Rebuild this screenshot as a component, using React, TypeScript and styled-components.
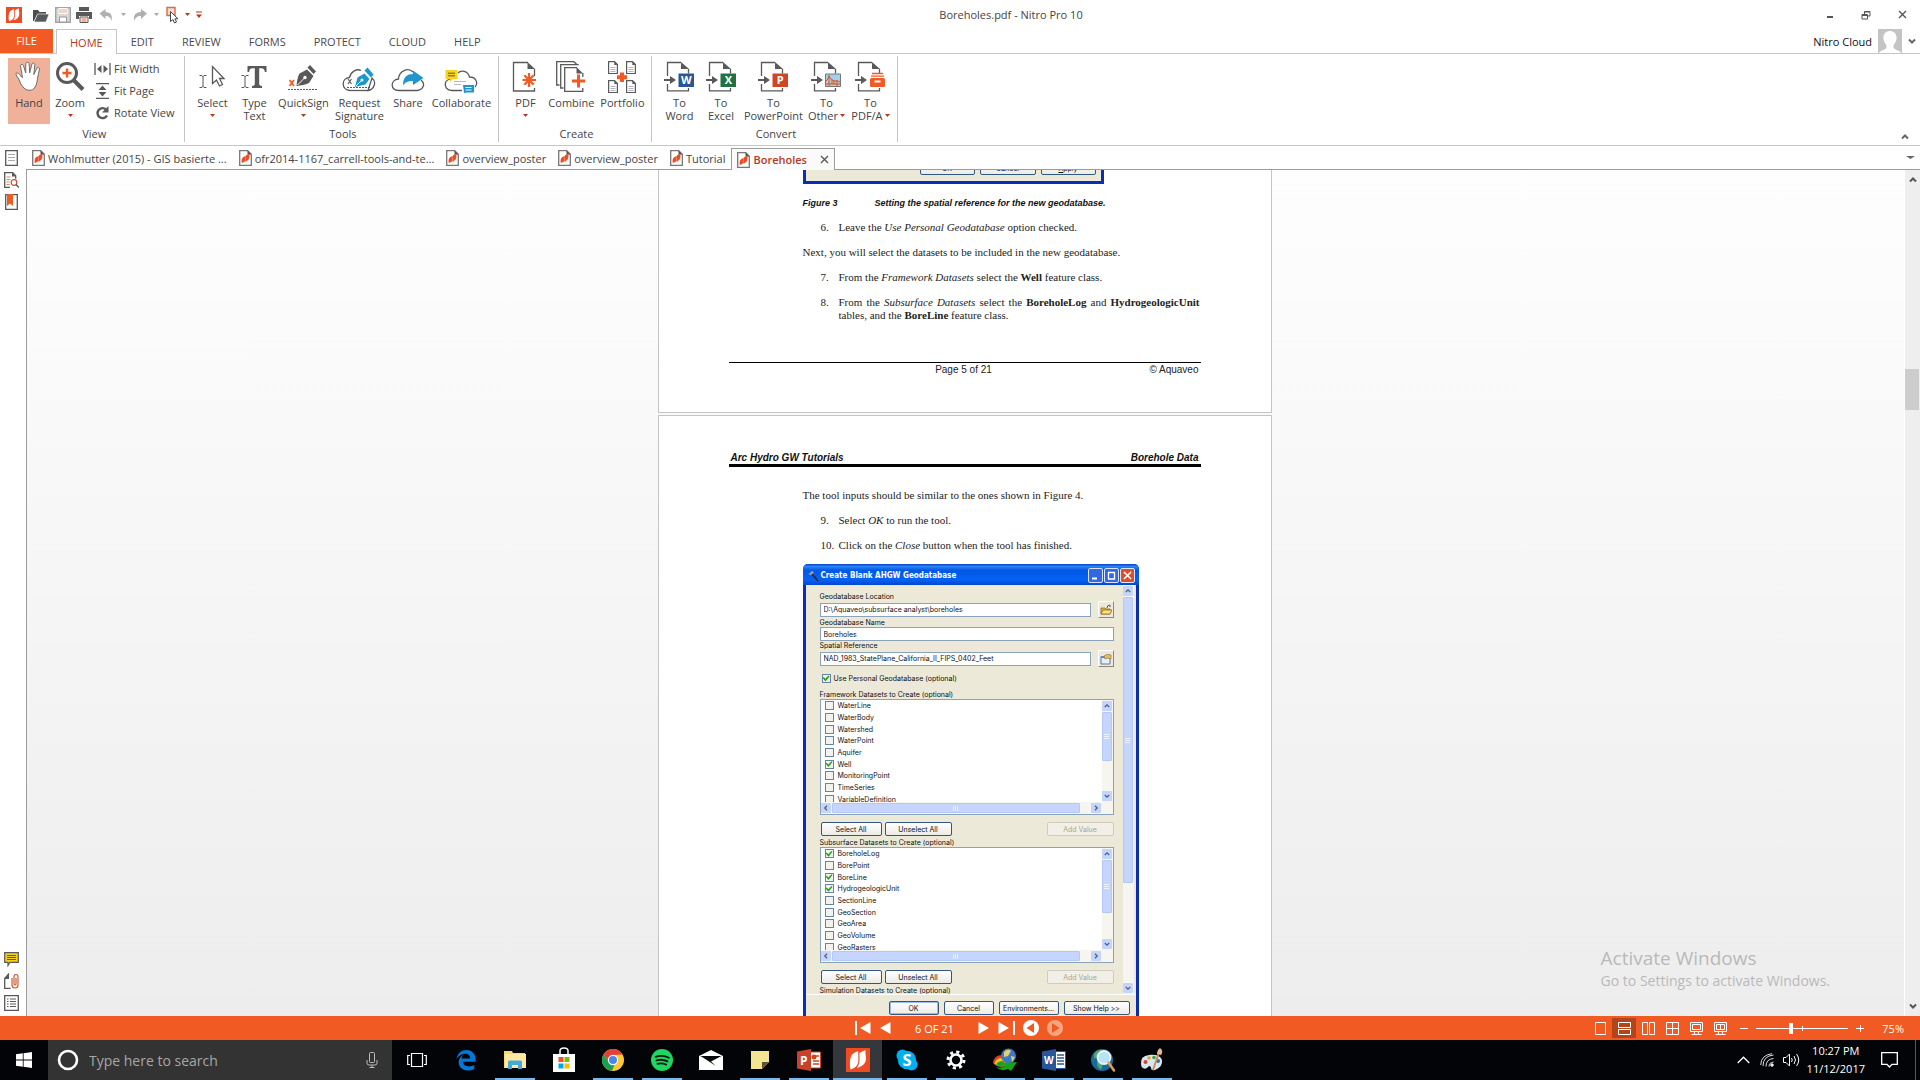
import React, { useState } from "react";
import styled, { createGlobalStyle, css } from "styled-components";

const UI = `"Open Sans", "Noto Sans", sans-serif`;
const ORANGE = "#f15a22";
const INK = "#58595b";
const RUST = "#b5391a";
const LINE = "#c6c6c6";

const Global = createGlobalStyle`
  *, *::before, *::after { box-sizing: border-box; }
  body { margin: 0; background: #fff; font: 11px/13px ${UI}; color: #444; }
  button { font: inherit; color: inherit; border: 0; padding: 0; background: none; }
  input { font: inherit; }
  svg { display: block; flex: none; }
  p, h1, h2, ul, ol { margin: 0; padding: 0; font: inherit; list-style: none; }
`;

/* ---------- application frame ---------- */

const Shell = styled.div`
  display: flex;
  flex-direction: column;
  height: 100vh;
  overflow: hidden;
`;

const TitleBar = styled.header`
  display: grid;
  grid-template-columns: 1fr auto 1fr;
  align-items: center;
  flex: none;
  height: 29px;
  padding-left: 6px;
`;

const QuickAccess = styled.div`
  display: flex;
  align-items: center;
  gap: 5px;
`;

const BareButton = styled.button`
  display: flex;
  align-items: center;
  justify-content: center;
`;

const AppTitle = styled.h1`
  padding-left: 96px;
  color: #444;
`;

const WindowButtons = styled.div`
  display: flex;
  justify-content: flex-end;
`;

const WindowButton = styled(BareButton)`
  width: 36px;
  height: 28px;
`;

const MenuBar = styled.nav`
  display: flex;
  flex: none;
  height: 25px;
  border-bottom: 1px solid ${LINE};
`;

const FileTab = styled.button`
  width: 53px;
  height: 24px;
  margin-right: 3px;
  padding-bottom: 2px;
  background: ${ORANGE};
  color: #fff;
`;

const MenuTab = styled.button<{ $active?: boolean }>`
  padding: 0 14px;
  color: #4a4a4a;
  ${(p) =>
    p.$active &&
    css`
      height: 25px;
      padding: 0 13px;
      border: 1px solid ${LINE};
      border-bottom: 0;
      background: #fff;
      color: ${RUST};
    `}
`;

const Account = styled.button`
  display: flex;
  align-items: center;
  gap: 6px;
  margin-left: auto;
  padding-right: 4px;
  color: #111;
`;

/* ---------- ribbon ---------- */

const Ribbon = styled.section`
  display: flex;
  flex: none;
  height: 92px;
  padding-top: 2px;
  border-bottom: 1px solid ${LINE};
`;

const Group = styled.div<{ $lead?: number }>`
  display: flex;
  flex-direction: column;
  height: 86px;
  padding: 2px 4px 0 ${(p) => p.$lead ?? 6}px;
  border-right: 1px solid ${LINE};
`;

const GroupTools = styled.div`
  display: flex;
  height: 66px;
`;

const GroupName = styled.h2`
  padding-top: 3px;
  line-height: 13px;
  text-align: center;
`;

const Tool = styled.button<{ $w: number; $on?: boolean }>`
  display: flex;
  flex-direction: column;
  align-items: center;
  gap: 3px;
  width: ${(p) => p.$w}px;
  height: 66px;
  padding-top: 3px;
  background: ${(p) => (p.$on ? "#f0b19b" : "transparent")};
`;

const ToolText = styled.span`
  display: flex;
  flex-direction: column;
  align-items: center;
  white-space: nowrap;
`;

const ToolLine = styled.span`
  display: flex;
  align-items: center;
  justify-content: center;
  gap: 2px;
  min-height: 13px;
`;

const SmallTools = styled.div`
  display: flex;
  flex-direction: column;
  padding: 0 6px 0 4px;
`;

const SmallTool = styled.button`
  display: flex;
  align-items: center;
  gap: 3px;
  height: 22px;
  padding-bottom: 1px;
  white-space: nowrap;
`;

const RibbonEnd = styled.div`
  display: flex;
  align-items: flex-end;
  margin-left: auto;
  padding: 0 11px 4px 0;
`;

/* ---------- work area ---------- */

const Work = styled.div`
  display: flex;
  flex: 1;
  min-height: 0;
`;

const Sidebar = styled.aside`
  display: flex;
  flex-direction: column;
  justify-content: space-between;
  flex: none;
  width: 26px;
  padding: 4px 0 5px;
`;

const SideStack = styled.div`
  display: flex;
  flex-direction: column;
  align-items: center;
  gap: 6px;
  padding-right: 3px;
`;

const Stage = styled.div`
  display: flex;
  flex-direction: column;
  flex: 1;
  min-width: 0;
`;

const DocTabs = styled.div`
  display: flex;
  flex: none;
  height: 24px;
  border-bottom: 1px solid #9c9c9c;
`;

const DocTab = styled.button<{ $active?: boolean }>`
  display: flex;
  align-items: center;
  gap: 3px;
  height: 24px;
  padding: 0 6px;
  color: #444;
  white-space: nowrap;
  ${(p) =>
    p.$active &&
    css`
      height: 22px;
      margin-top: 2px;
      padding: 0 5px;
      border: 1px solid #9c9c9c;
      border-bottom: 0;
      background: #fafafa;
      color: ${RUST};
      font-weight: 600;
    `}
`;

const CloseMark = styled.span`
  padding-left: 10px;
`;

const TabsEnd = styled.div`
  display: flex;
  align-items: center;
  margin-left: auto;
  padding-right: 5px;
`;

const Viewer = styled.main`
  position: relative;
  display: flex;
  flex: 1;
  min-height: 0;
  border-left: 1px solid #9c9c9c;
`;

const Pages = styled.div`
  display: flex;
  flex-direction: column;
  align-items: center;
  gap: 2px;
  flex: 1;
  padding-right: 2px;
  overflow: hidden;
  border-right: 1px solid #fff;
  background: linear-gradient(#fefefe, #ededed);
`;

const ScrollRail = styled.div`
  display: flex;
  flex-direction: column;
  align-items: center;
  justify-content: space-between;
  flex: none;
  width: 15px;
  padding: 6px 0;
  background: linear-gradient(#cdcdcd, #cdcdcd) 0 199px / 14px 41px no-repeat #eeeeee;
`;

const Watermark = styled.div`
  position: absolute;
  right: 90px;
  bottom: 26px;
  display: flex;
  flex-direction: column;
  color: #b9b9b9;
  font-size: 14px;
  line-height: 19px;
`;

const WatermarkTitle = styled.strong`
  font-weight: 400;
  font-size: 19px;
  line-height: 26px;
`;

/* ---------- document pages ---------- */

const Sheet = styled.article<{ $first?: boolean }>`
  flex: none;
  width: 614px;
  padding: 0 70px 35px 70px;
  border: 1px solid #c5c5c5;
  border-top-width: ${(p) => (p.$first ? 0 : 1)}px;
  background: #fff;
  color: #222;
  font: 11px/13px "Liberation Serif", serif;
`;

const RunningHead = styled.div`
  display: flex;
  justify-content: space-between;
  padding: 35px 2px 0;
  border-bottom: 3px solid #000;
  color: #111;
  font: italic 700 10px/13px "Liberation Sans", sans-serif;
`;

const RunningFoot = styled.div`
  display: grid;
  grid-template-columns: 1fr auto 1fr;
  margin-top: 40px;
  padding: 0 2px 1px 0;
  border-top: 1px solid #000;
  font: 10px/13px "Liberation Sans", sans-serif;
`;

const FootRight = styled.span`
  text-align: right;
`;

const Prose = styled.div<{ $top: number }>`
  display: flex;
  flex-direction: column;
  gap: 12px;
  padding: ${(p) => p.$top}px 1px 0 74px;
`;

const Caption = styled.p`
  display: flex;
  gap: 37px;
  color: #111;
  font: italic 700 9px/11px "Liberation Sans", sans-serif;
`;

const Step = styled.div`
  display: grid;
  grid-template-columns: 18px 1fr;
  padding-left: 18px;
  text-align: justify;
  white-space: normal;
`;

/* ---------- dialog shown in the figures ---------- */

const DIALOG_FONT = `"Inter", "DejaVu Sans", sans-serif`;

const FigureEnd = styled.div`
  display: flex;
  align-items: flex-end;
  justify-content: flex-end;
  gap: 5px;
  width: 301px;
  height: 14px;
  margin-left: 74px;
  padding: 0 5px 6px 0;
  border: 3px solid #0a2fb4;
  border-top: 0;
  background: #ece9d8;
  font: 7px/9px ${DIALOG_FONT};
`;

const Dialog = styled.section`
  width: 336px;
  border: 3px solid #0a2fb4;
  border-top: 0;
  border-radius: 5px 5px 0 0;
  background: #ece9d8;
  color: #111;
  font: 7px/9px ${DIALOG_FONT};
`;

const DialogTitle = styled.div`
  display: flex;
  align-items: center;
  gap: 2px;
  height: 21px;
  margin: 0 -3px;
  padding: 2px 4px 0 5px;
  border-radius: 5px 5px 0 0;
  background: linear-gradient(#0a3fc8, #2a83f5 12%, #0058e4 30%, #0561f5 75%, #0348cc);
  color: #fff;
  font: 700 8px/10px "DejaVu Sans Condensed", sans-serif;
`;

const DialogButtons = styled.div`
  display: flex;
  gap: 1px;
  margin-left: auto;
`;

const TitleButton = styled(BareButton)<{ $close?: boolean }>`
  width: 15px;
  height: 15px;
  border: 1px solid #d8e4ff;
  border-radius: 2px;
  background: ${(p) => (p.$close ? "#dc4f28" : "#3468e0")};
`;

const DialogBody = styled.div`
  display: flex;
  height: 409px;
  padding-right: 2px;
  overflow: hidden;
`;

const Form = styled.form`
  flex: 1;
  min-width: 0;
  padding: 7px 9px 0 14px;
`;

const FieldLabel = styled.label`
  display: block;
  height: 9px;
  white-space: nowrap;
`;

const FieldRow = styled.div<{ $h: number }>`
  display: flex;
  align-items: center;
  justify-content: space-between;
  gap: 7px;
  height: ${(p) => p.$h}px;
`;

const TextBox = styled.input`
  flex: 1;
  min-width: 0;
  height: 14px;
  padding: 0 3px;
  border: 1px solid #8aa3b8;
  background: #fff;
  color: #111;
`;

const PickButton = styled(BareButton)`
  width: 16px;
  height: 17px;
  border: 1px solid #fff;
  border-right-color: #8d8a7a;
  border-bottom-color: #8d8a7a;
`;

const Tick = styled.input`
  appearance: none;
  flex: none;
  width: 9px;
  height: 9px;
  margin: 0;
  border: 1px solid #6584a3;
  background: #f3f2ec;
  &:checked::after {
    content: "";
    display: block;
    width: 7px;
    height: 7px;
    background: #21a121;
    clip-path: polygon(0 40%, 18% 30%, 40% 55%, 85% 8%, 100% 20%, 42% 92%);
  }
`;

const TickRow = styled.label<{ $lead?: boolean }>`
  display: flex;
  align-items: center;
  gap: 4px;
  white-space: nowrap;
  ${(p) =>
    p.$lead &&
    css`
      gap: 3px;
      height: 23px;
      padding-left: 2px;
    `}
`;

const ListBox = styled.div`
  height: 116px;
  border: 1px solid #8aa3b8;
  background: #fff;
`;

const ListTop = styled.div`
  display: flex;
  height: 102px;
  overflow: hidden;
`;

const ListRows = styled.div`
  display: grid;
  grid-template-rows: repeat(9, 1fr);
  flex: 1;
  height: 105px;
  padding-left: 4px;
`;

const XpRail = styled.div<{ $across?: boolean }>`
  display: flex;
  flex-direction: ${(p) => (p.$across ? "row" : "column")};
  flex: none;
  gap: 1px;
  ${(p) => (p.$across ? "height: 12px; padding: 1px 12px 1px 0;" : "width: 11px; padding: 1px 0;")}
  background: #f6f5f0;
`;

const XpArrow = styled(BareButton)`
  flex: none;
  width: 10px;
  height: 10px;
  border-radius: 1px;
  background: #c5d4fb;
`;

const XpThumb = styled.div<{ $size: number; $across?: boolean }>`
  display: flex;
  align-items: center;
  justify-content: center;
  ${(p) => (p.$across ? `width: ${p.$size}px; height: 10px;` : `height: ${p.$size}px; width: 10px;`)}
  border: 1px solid #b4c8f6;
  border-radius: 1px;
  background: #c6d5fd;
`;

const Filler = styled.div`
  flex: 1;
`;

const XpButton = styled.button<{ $w: number; $main?: boolean }>`
  flex: none;
  width: ${(p) => p.$w}px;
  height: 14px;
  border: 1px solid #31587f;
  border-radius: 2px;
  background: linear-gradient(#fff, #ecebe5);
  color: #111;
  white-space: nowrap;
  ${(p) => p.$main && "box-shadow: inset 0 0 0 1px #9dbbf0;"}
  &:disabled {
    border-color: #cfccbc;
    background: #f2f0e6;
    color: #a8a595;
  }
`;

const ButtonRow = styled.div`
  display: flex;
  gap: 3px;
  height: 23px;
  padding: 7px 0 0 1px;
`;

const DialogFoot = styled.div`
  display: flex;
  justify-content: flex-end;
  gap: 5px;
  height: 34px;
  padding: 6px;
  border-top: 1px solid #fff;
`;

/* ---------- status bar ---------- */

const StatusBar = styled.footer`
  display: grid;
  grid-template-columns: 1fr auto 1fr;
  align-items: center;
  flex: none;
  height: 24px;
  background: ${ORANGE};
  color: #fff;
`;

const Pager = styled.div`
  grid-column: 2;
  display: flex;
  align-items: center;
  gap: 8px;
  padding-right: 2px;
`;

const PageCount = styled.span`
  padding: 0 16px;
`;

const ViewControls = styled.div`
  display: flex;
  align-items: center;
  justify-content: flex-end;
  padding-right: 16px;
`;

const ViewButton = styled(BareButton)<{ $on?: boolean }>`
  width: 24px;
  height: 20px;
  background: ${(p) => (p.$on ? "#b3451c" : "transparent")};
`;

const ZoomStep = styled(BareButton)`
  width: 24px;
  height: 20px;
`;

const ZoomSlider = styled.input`
  appearance: none;
  width: 92px;
  height: 12px;
  margin: 0;
  background:
    linear-gradient(#fff, #fff) center / 100% 1px no-repeat,
    linear-gradient(#fff, #fff) 50% 50% / 1px 5px no-repeat;
  &::-webkit-slider-thumb {
    appearance: none;
    width: 4px;
    height: 11px;
    background: #fff;
  }
`;

const ZoomValue = styled.output`
  padding-left: 10px;
`;

/* ---------- desktop taskbar ---------- */

const TaskBar = styled.nav`
  display: flex;
  flex: none;
  height: 40px;
  background: #020408;
  color: #fff;
`;

const StartButton = styled(BareButton)`
  width: 48px;
`;

const SearchBox = styled.label`
  display: flex;
  align-items: center;
  gap: 10px;
  width: 344px;
  padding: 0 14px 0 9px;
  background: #333;
`;

const SearchInput = styled.input`
  flex: 1;
  min-width: 0;
  padding: 0;
  border: 0;
  outline: 0;
  background: none;
  color: #fff;
  font-size: 14px;
  &::placeholder {
    color: #a6a6a6;
    opacity: 1;
  }
`;

const TaskButton = styled(BareButton)<{ $open?: boolean; $front?: boolean }>`
  width: 49px;
  background:
    linear-gradient(#76b9ed, #76b9ed) center bottom / ${(p) => (p.$front ? 49 : p.$open ? 40 : 0)}px 2px no-repeat,
    ${(p) => (p.$front ? "#34373b" : "transparent")};
`;

const Tray = styled.div`
  display: flex;
  align-items: center;
  gap: 7px;
  margin-left: auto;
  padding-right: 4px;
`;

const Clock = styled.time`
  display: flex;
  flex-direction: column;
  align-items: center;
  line-height: 18px;
`;

const NoticeButton = styled(BareButton)`
  width: 36px;
  height: 40px;
  padding-right: 2px;
`;

const DesktopEdge = styled.div`
  width: 1px;
  height: 40px;
  background: #55585c;
`;

/* ---------- drawings ---------- */

const Down = ({ c = RUST, w = 5 }: { c?: string; w?: number }) => (
  <svg width={w} height="3" viewBox="0 0 6 3" preserveAspectRatio="none">
    <path d="M0 0h6L3 3z" fill={c} />
  </svg>
);

const Chevron = ({ up, c = "#666", w = 8 }: { up?: boolean; c?: string; w?: number }) => (
  <svg width={w} height={w} viewBox="0 0 8 8">
    <path d={up ? "M1 5.5 4 2.5 7 5.5" : "M1 2.5 4 5.5 7 2.5"} fill="none" stroke={c} strokeWidth="2" />
  </svg>
);

const NitroTile = ({ size = 16 }: { size?: number }) => (
  <svg width={size} height={size} viewBox="0 0 24 24">
    <rect width="24" height="24" fill="#f04c23" />
    <path d="M4.500 21.500C3.600 17 3.800 12 4.800 9 6 5.500 8.500 4.200 12.300 3.200c-.3 3 .2 5.500.1 8.800 0 4.500-2.400 8-7.900 9.500z" fill="#fff" />
    <path d="M13.300 5.500c2-1.800 4-2.500 6.200-3.200-.5 2.500.5 5 .4 8.500-.1 4.500-3 7.700-9 9.200 3-3.500 3-8.500 2.400-14.500z" fill="#fff" />
  </svg>
);

const PdfDoc = () => (
  <svg width="13" height="16" viewBox="0 0 13 16">
    <path d="M.7.7h8l3.600 3.600v11H.7z" fill="#fff" stroke="#777" strokeWidth="1.300" />
    <path d="M8.500.5v4h4z" fill="#555" />
    <path d="M2.800 13c-.5-3.500 0-6 3.900-7 0 3.500.2 6-3.900 7z" fill="#f04c23" />
    <path d="M6.800 5.600c1.200-1 2-1.400 3.600-1.900.3 3.500.2 6.800-4.600 8.100 1.200-2 1.200-4 1-6.200z" fill="#f04c23" />
  </svg>
);

const page = "M22.500 8v7M22.500 27v3H1.500V1.500H16";

const Glyph: Record<string, React.ReactNode> = {
  hand: (
    <svg width="28" height="32" viewBox="0 0 28 32">
      <path
        d="M9 27c-3-2.500-3.500-5-5-8.500C3 16.500.5 14 1 12.500c1-1.200 3.500 0 5.500 3.500l.9.600C7 12 5.500 7 5.600 4.600c.2-1.600 2.300-1.700 2.900 0L10.700 12C10.900 8 10.500 4 11 2.300c.5-1.500 2.600-1.500 3 0 .5 2.700.4 6 .7 9.500 1-3.500 1.500-6.500 2.300-8.800.6-1.500 2.700-1 2.800.5.1 3-.8 6.500-1 10 1.200-2 2-4.500 3.200-6.300.8-1.300 2.600-.7 2.500.8-.3 3-1.700 6-2 9.500-.5 5-1.500 8-4 10.500-2 1.800-7 1.800-9.500-1z"
        fill="#fff" stroke="#6a6a6a" strokeWidth="1"
      />
    </svg>
  ),
  zoom: (
    <svg width="30" height="32" viewBox="0 0 30 32">
      <circle cx="12" cy="12" r="9.500" fill="#fff" stroke={INK} strokeWidth="3" />
      <path d="M18.500 19 28 28.500" stroke={INK} strokeWidth="4" />
      <path d="M12 7.500v9M7.500 12h9" stroke={ORANGE} strokeWidth="2.400" />
    </svg>
  ),
  select: (
    <svg width="28" height="32" viewBox="0 0 28 32">
      <path d="M1.500 14.500h2.500l1 1 1-1h2.500M5 15v11M1.500 26.500h2.500l1-1 1 1h2.500" fill="none" stroke={INK} />
      <path d="M14.500 5.500v17l4-3.500 3 6 3-1.500-3-6h4.500z" fill="#fff" stroke={INK} strokeWidth="1.300" />
    </svg>
  ),
  type: (
    <svg width="28" height="32" viewBox="0 0 28 32">
      <path d="M1.500 14.500h2.500l1 1 1-1h2.500M5 15v11M1.500 26.500h2.500l1-1 1 1h2.500" fill="none" stroke={INK} />
      <path d="M7.500 5h19v6h-1.600c-.4-2.700-1.200-3.800-3.700-3.800h-2v15.500c0 1.500.6 2 2.800 2.300V27H12v-2c2.200-.3 2.800-.8 2.800-2.300V7.200h-2c-2.500 0-3.300 1-3.700 3.800H7.500z" fill={INK} />
    </svg>
  ),
  sign: (
    <svg width="30" height="32" viewBox="0 0 30 32">
      <path d="M8.500 25C9 20 9.500 16 11.500 12.500l7.500-4 6.500 6.500-4.500 7C17 24 13 24.500 8.500 25z" fill={INK} />
      <path d="M19.500 6.500 22 4l6 6.500-2.500 2.500z" fill={INK} />
      <path d="m9.500 24 7-7" stroke="#fff" />
      <circle cx="17" cy="16.500" r="1.700" fill="#fff" />
      <path d="m1.500 19 4.500 6m0-6-4.500 6" stroke={ORANGE} strokeWidth="1.700" />
      <path d="M0 28.500h30" stroke={INK} strokeWidth="1.200" strokeDasharray="2 1" />
    </svg>
  ),
  request: (
    <svg width="34" height="32" viewBox="0 0 34 32">
      <path d="M8 29.500C-1 29-1 17 7.500 16.500 9 10 15 7.500 19 9.500m11 7.500c5 4 2 12-4 12.500z" fill="none" stroke={INK} strokeWidth="1.300" />
      <path d="M8 29.500h18" stroke={INK} strokeWidth="1.300" />
      <path d="M13 26l2.500-9.500 7-4 5 5.500-4 5.500z" fill="#1e96cc" />
      <path d="m22.500 9.500 3-3 6 7-2.500 3z" fill="#1e96cc" />
      <path d="m14 25 5-5" stroke="#fff" />
      <circle cx="20" cy="19" r="1.500" fill="#fff" />
      <path d="m6 18 3.500 5m0-5L6 23" stroke={INK} strokeWidth="1.200" />
      <path d="M5 26.500h24" stroke={INK} strokeDasharray="2 1" />
    </svg>
  ),
  share: (
    <svg width="34" height="32" viewBox="0 0 34 32">
      <path d="M8 29.500C-1 29-1 19 7.500 18 8 10 17 6 22 11m8 8c5 4 2 10-4 10.500H8" fill="none" stroke={INK} strokeWidth="1.300" />
      <path d="M12 24.500C12 16 16 13 22 13V9.500L32.500 17 22 24v-4c-5 0-7.500 1-10 4.500z" fill="#1e96cc" />
    </svg>
  ),
  collaborate: (
    <svg width="34" height="32" viewBox="0 0 34 32">
      <path d="M18 29.500H8C0 29-1 20 6 18m8-6c3-3.500 10-2 11.500 4C33 16 34 23 31 26" fill="none" stroke={INK} strokeWidth="1.300" />
      <path d="M1.500 9h12v9H9l-3 3v-3H1.500z" fill="#fbd21c" />
      <path d="M4 12.200h7M4 14.800h7" stroke={INK} />
      <path d="M10 20.500h12M10 23.500h7" stroke="#bbb" />
      <path d="M19 24h11v7.500h-7L20 32z" fill="#1e96cc" />
      <path d="M21.500 26.500h6M21.500 29h6" stroke="#fff" />
    </svg>
  ),
  pdf: (
    <svg width="26" height="32" viewBox="0 0 26 32">
      <path d={page} fill="none" stroke={INK} strokeWidth="1.300" />
      <path d="M15.500 1v7H23z" fill={INK} />
      <path d="M17 12v14M10.500 19h13.500M12.300 14.300l9.400 9.400m0-9.400-9.400 9.400" stroke={ORANGE} strokeWidth="2.200" />
    </svg>
  ),
  combine: (
    <svg width="30" height="32" viewBox="0 0 30 32">
      <path d="M3.500 24H.700V.700h17.500" fill="none" stroke={INK} strokeWidth="1.300" />
      <path d="M7.500 27H4.700V3.700h18M18 .700l3 3" fill="none" stroke={INK} strokeWidth="1.300" />
      <path d="M26.800 12v4m0 11v3.300H8.700V6.700H21" fill="none" stroke={INK} strokeWidth="1.300" />
      <path d="M20.500 6v6.500H27z" fill={INK} />
      <path d="M22.500 13.500v13M16 20h13" stroke={ORANGE} strokeWidth="3" />
    </svg>
  ),
  portfolio: (
    <svg width="28" height="32" viewBox="0 0 28 32">
      {[[0, 0], [18, 0], [0, 19], [18, 19]].map(([x, y]) => (
        <g key={`${x}-${y}`} transform={`translate(${x} ${y})`}>
          <path d="M.600.600h6L9.400 3.500v9H.600z" fill="#fff" stroke={INK} strokeWidth="1.200" />
          <path d="M6.300.500v3.500h3.300z" fill={INK} />
          <path d="M2.500 6.500h5M2.500 8.500h5M2.500 10.500h5" stroke="#aab" strokeWidth=".900" />
        </g>
      ))}
      <path d="M14 11.500v9.500M9 16.200h10" stroke={ORANGE} strokeWidth="4" />
    </svg>
  ),
};

const ToIcon = ({ kind }: { kind: string }) => {
  const fill: Record<string, string> = { W: "#2a5699", X: "#207245", P: "#d04525" };
  return (
    <svg width="30" height="32" viewBox="0 0 30 32">
      <path d="M3.500 15V1.500H17M24.500 8v4.500M24.500 27v2.800h-21V23" fill="none" stroke={INK} strokeWidth="1.300" />
      <path d="M17 1v7h8z" fill={INK} />
      <path d="M0 19h8" stroke={INK} strokeWidth="2" />
      <path d="m6 15 6 4-6 4z" fill={INK} />
      {fill[kind] && (
        <>
          <path d="M14.500 12.500H30v13.500H14.500z" fill={fill[kind]} />
          <text x="22.300" y="23.300" fill="#fff" fontFamily="Open Sans" fontSize="11" fontWeight="700" textAnchor="middle">
            {kind}
          </text>
        </>
      )}
      {kind === "other" && (
        <>
          <path d="M14.500 13h15v12.500h-15z" fill="#9fd3ec" stroke="#777" />
          <path d="M15 21h14v4H15z" fill="#b9c8c0" />
          <path d="M18 25V14m8 11v-6M15 23h14M15 20q2-1 3-5 3 6 8 5 2 0 3 1M21 18v5m2-4v4" stroke="#d5542c" fill="none" />
        </>
      )}
      {kind === "archive" && (
        <>
          <path d="M17 12.500h11M16 15.200h13" stroke={ORANGE} strokeWidth="1.300" />
          <rect x="15" y="17" width="15" height="9" rx="1.500" fill={ORANGE} />
          <path d="M19.500 20.500h6" stroke="#fff" strokeWidth="2" />
        </>
      )}
    </svg>
  );
};

const TaskArt: Record<string, React.ReactNode> = {
  "Task View": (
    <svg width="20" height="16" viewBox="0 0 20 16" fill="none" stroke="#fff" strokeWidth="1.200">
      <path d="M4.500 1.500h11v13h-11zM3 3.500H.700v9H3M17 3.500h2.300v9H17" />
    </svg>
  ),
  Edge: (
    <svg width="22" height="24" viewBox="0 0 24 24">
      <path d="M1.500 10.800C3 4.500 7 1 12.500 1 19 1 22.500 6 22.500 11.500V14H8.500c.2 3.500 3 5 6.500 5 2.500 0 4.500-.7 6-1.600v4.300c-2 1-4.500 1.800-7.500 1.800C8 23.500 4 19.500 4 14.500c0-3.500 1.800-6.500 4.800-8-1.200 1.300-1.500 2.500-1.700 3.900h9.400c0-3.500-1.800-5.200-5-5.200-4 0-7.200 2-10 5.600z" fill="#0078d7" />
    </svg>
  ),
  "File Explorer": (
    <svg width="22" height="20" viewBox="0 0 22 20">
      <path d="M0 1h8l1 2h12v15H0z" fill="#f8d775" />
      <path d="M1 4h21v14H1z" fill="#ffe9a2" />
      <path d="M4 19v-7q0-1.500 1.500-1.500h11Q18 10.500 18 12v7h-4v-4H8v4z" fill="#46a9d6" />
    </svg>
  ),
  Store: (
    <svg width="24" height="26" viewBox="0 0 24 26">
      <path d="M8 8V4q0-3 4-3t4 3v4" fill="none" stroke="#fff" strokeWidth="1.500" />
      <path d="M1 7h22v18H1z" fill="#fff" />
      <path d="M6.500 10h5v5h-5z" fill="#f25022" /><path d="M12.500 10h5v5h-5z" fill="#7fba00" />
      <path d="M6.500 16.500h5v5h-5z" fill="#00a4ef" /><path d="M12.500 16.500h5v5h-5z" fill="#ffb900" />
    </svg>
  ),
  Chrome: (
    <svg width="22" height="22" viewBox="0 0 24 24">
      <circle cx="12" cy="12" r="12" fill="#fcc934" />
      <path d="M1.600 6A12 12 0 0 1 22.400 6L12 6.600 8 14.500z" fill="#e34133" />
      <path d="M1.600 6 8 15l6 2-3.300 7A12 12 0 0 1 1.600 6z" fill="#1d9e55" />
      <circle cx="12" cy="12" r="5.600" fill="#fff" /><circle cx="12" cy="12" r="4.400" fill="#4a86ee" />
    </svg>
  ),
  Spotify: (
    <svg width="22" height="22" viewBox="0 0 24 24">
      <circle cx="12" cy="12" r="12" fill="#1fd662" />
      <path d="M5 8.500q8-2.500 14.500 1M6 12.500q6.500-2 12 1M7 16.200q5-1.500 9.500.8" stroke="#0a1a10" strokeWidth="2" fill="none" strokeLinecap="round" />
    </svg>
  ),
  Mail: (
    <svg width="24" height="20" viewBox="0 0 24 20">
      <path d="M0 6 12 0l12 6v14H0z" fill="#fff" />
      <path d="M1.500 6h21L12 11.500l5 4.500z" fill="#05070b" />
    </svg>
  ),
  "Sticky Notes": (
    <svg width="18" height="18" viewBox="0 0 18 18">
      <path d="M0 0h18v11l-7 7H0z" fill="#f3e491" /><path d="M11 18v-7h7z" fill="#5b5431" />
    </svg>
  ),
  PowerPoint: (
    <svg width="24" height="22" viewBox="0 0 24 22">
      <path d="M12 3h11.500v16H12z" fill="#fff" stroke="#c9432a" />
      <path d="M16 7h6M16 12h6M16 15h6" stroke="#d04525" strokeWidth="1.400" />
      <circle cx="17" cy="8" r="2.500" fill="#d04525" />
      <path d="M0 2.500 14 0v22L0 19.500z" fill="#c8412b" />
      <text x="6.800" y="15.500" fill="#fff" fontSize="12" fontWeight="700" fontFamily="Open Sans" textAnchor="middle">P</text>
    </svg>
  ),
  "Nitro Pro": <NitroTile size={24} />,
  Skype: (
    <svg width="22" height="22" viewBox="0 0 24 24">
      <circle cx="12" cy="12" r="10" fill="#00aff0" /><circle cx="7" cy="7" r="6.500" fill="#00aff0" /><circle cx="17" cy="17" r="6.500" fill="#00aff0" />
      <text x="12" y="18.500" fill="#fff" fontSize="18" fontWeight="700" fontFamily="Open Sans" textAnchor="middle">S</text>
    </svg>
  ),
  Settings: (
    <svg width="20" height="20" viewBox="0 0 20 20" fill="none" stroke="#fff">
      <circle cx="10" cy="10" r="5.500" strokeWidth="2.600" />
      <circle cx="10" cy="10" r="8" strokeWidth="3" strokeDasharray="3.100 3.180" />
    </svg>
  ),
  "Download Manager": (
    <svg width="24" height="24" viewBox="0 0 24 24">
      <path d="M0 15Q1 7 9 7q6 0 7 5l-2 5Q5 21 0 15z" fill="#e83b22" />
      <path d="M1.500 15.500Q3 10 9 10q5 1 5 5l-3 3Q5 20 1.500 15.500z" fill="#f7c827" />
      <path d="M3 16.500q2-3.500 6-3.500 3 1 3 4-5 3-9-.5z" fill="#16a31d" />
      <circle cx="15.500" cy="8" r="7.500" fill="#3c78c8" />
      <path d="M11 4q4-4 7-1l-3 5-4 1zM18 8l4 1-3 5z" fill="#e4cf6a" />
      <path d="M3 19q4 2 9-1l-1-3 13-1-6 9-3-2q-7 3-12-2z" fill="#16a31d" />
    </svg>
  ),
  Word: (
    <svg width="24" height="22" viewBox="0 0 24 22">
      <path d="M12 2.500h11.500v17H12z" fill="#fff" stroke="#2a5699" />
      <path d="M15 6h7M15 9h7M15 12h7M15 15h7" stroke="#2a5699" strokeWidth="1.300" />
      <path d="M0 2.500 14 0v22L0 19.500z" fill="#2a5699" />
      <text x="6.800" y="15" fill="#fff" fontSize="10" fontWeight="700" fontFamily="Open Sans" textAnchor="middle">W</text>
    </svg>
  ),
  ArcMap: (
    <svg width="24" height="24" viewBox="0 0 24 24">
      <circle cx="11" cy="12" r="11" fill="#1c6a9c" />
      <path d="M3 6q4-5 8-4l-3 6-5 3zM6 13l6 2-2 7q-5-4-4-9z" fill="#4fa86a" />
      <circle cx="13" cy="9.500" r="6.500" fill="#b8e2f5" stroke="#e8f4fa" strokeWidth="1.800" />
      <path d="m17.500 14.500 5.500 8" stroke="#d9a05a" strokeWidth="2.600" strokeLinecap="round" />
    </svg>
  ),
  Paint: (
    <svg width="24" height="24" viewBox="0 0 24 24">
      <path d="M1 16Q0 8 9 7q11-1 13 5 1 7-7 10-4 1-4-2 0-2-2-2-3 4-6 2-2-1-2-4z" fill="#d8e6ef" />
      <circle cx="5.500" cy="14" r="2" fill="#d8432c" /><circle cx="9" cy="10" r="1.800" fill="#e7a52a" />
      <circle cx="14" cy="9.500" r="1.800" fill="#3f9b46" /><circle cx="18" cy="13" r="2" fill="#2e6cc0" />
      <path d="M18.500 6 13 22" stroke="#c98a45" strokeWidth="1.800" /><path d="M17 6q0-4 3-6 4 3 1 7z" fill="#e5b98c" />
    </svg>
  ),
};

const OPEN_APPS = ["File Explorer", "Chrome", "Spotify", "Sticky Notes", "PowerPoint", "Nitro Pro", "Skype", "Settings", "Download Manager", "Word", "ArcMap", "Paint"];

/* ---------- composed parts ---------- */

type ToolDef = { icon: React.ReactNode; w: number; lines: string[]; menu?: "below" | "inline"; on?: boolean };

const ToolButton = ({ icon, w, lines, menu, on }: ToolDef) => (
  <Tool type="button" $w={w} $on={on}>
    {icon}
    <ToolText>
      {lines.map((line, i) => (
        <ToolLine key={line}>
          {line}
          {menu === "inline" && i === lines.length - 1 && <Down />}
        </ToolLine>
      ))}
      {menu === "below" && <ToolLine><Down /></ToolLine>}
    </ToolText>
  </Tool>
);

const GROUPS: { name: string; tools: ToolDef[] }[] = [
  {
    name: "Tools",
    tools: [
      { icon: Glyph.select, w: 42, lines: ["Select"], menu: "below" },
      { icon: Glyph.type, w: 42, lines: ["Type", "Text"] },
      { icon: Glyph.sign, w: 56, lines: ["QuickSign"], menu: "below" },
      { icon: Glyph.request, w: 56, lines: ["Request", "Signature"] },
      { icon: Glyph.share, w: 41, lines: ["Share"] },
      { icon: Glyph.collaborate, w: 66, lines: ["Collaborate"] },
    ],
  },
  {
    name: "Create",
    tools: [
      { icon: Glyph.pdf, w: 40, lines: ["PDF"], menu: "below" },
      { icon: Glyph.combine, w: 52, lines: ["Combine"] },
      { icon: Glyph.portfolio, w: 50, lines: ["Portfolio"] },
    ],
  },
  {
    name: "Convert",
    tools: [
      { icon: <ToIcon kind="W" />, w: 42, lines: ["To", "Word"] },
      { icon: <ToIcon kind="X" />, w: 41, lines: ["To", "Excel"] },
      { icon: <ToIcon kind="P" />, w: 64, lines: ["To", "PowerPoint"] },
      { icon: <ToIcon kind="other" />, w: 42, lines: ["To", "Other"], menu: "inline" },
      { icon: <ToIcon kind="archive" />, w: 46, lines: ["To", "PDF/A"], menu: "inline" },
    ],
  },
];

const Grip = ({ across }: { across?: boolean }) => (
  <svg width="5" height="5" viewBox="0 0 5 5">
    <path d={across ? "M.500 0v5M2.500 0v5M4.500 0v5" : "M0 .500h5M0 2.500h5M0 4.500h5"} stroke="#eef4ff" />
  </svg>
);

const XpChevron = ({ turn }: { turn: number }) => (
  <svg width="6" height="6" viewBox="0 0 6 6">
    <path d="M.8 4 3 1.800 5.200 4" fill="none" stroke="#4d6185" strokeWidth="1.300" transform={`rotate(${turn} 3 3)`} />
  </svg>
);

const VerticalRail = ({ thumb }: { thumb: number }) => (
  <XpRail>
    <XpArrow type="button" aria-label="Scroll up"><XpChevron turn={0} /></XpArrow>
    <XpThumb $size={thumb}><Grip /></XpThumb>
    <Filler />
    <XpArrow type="button" aria-label="Scroll down"><XpChevron turn={180} /></XpArrow>
  </XpRail>
);

const DatasetList = ({ names, checked, thumb }: { names: string[]; checked: string[]; thumb: number }) => (
  <>
    <ListBox>
      <ListTop>
        <ListRows>
          {names.map((n) => (
            <TickRow key={n}>
              <Tick type="checkbox" defaultChecked={checked.includes(n)} />
              {n}
            </TickRow>
          ))}
        </ListRows>
        <VerticalRail thumb={thumb} />
      </ListTop>
      <XpRail $across>
        <XpArrow type="button" aria-label="Scroll left"><XpChevron turn={270} /></XpArrow>
        <XpThumb $across $size={248}><Grip across /></XpThumb>
        <Filler />
        <XpArrow type="button" aria-label="Scroll right"><XpChevron turn={90} /></XpArrow>
      </XpRail>
    </ListBox>
    <ButtonRow>
      <XpButton type="button" $w={61}>Select All</XpButton>
      <XpButton type="button" $w={67}>Unselect All</XpButton>
      <Filler />
      <XpButton type="button" $w={67} disabled>Add Value</XpButton>
    </ButtonRow>
  </>
);

const GeodatabaseDialog = () => (
  <Dialog aria-label="Create Blank AHGW Geodatabase">
    <DialogTitle>
      <svg width="11" height="12" viewBox="0 0 11 12">
        <path d="m3 3 7 8" stroke="#2b2b2b" strokeWidth="1.600" /><path d="M.500 4.500 4 .800l2 1.700-3 2.500z" fill="#9aa0a8" />
      </svg>
      Create Blank AHGW Geodatabase
      <DialogButtons>
        <TitleButton type="button" aria-label="Minimize"><svg width="9" height="9"><path d="M1 7.500h5" stroke="#fff" strokeWidth="2" /></svg></TitleButton>
        <TitleButton type="button" aria-label="Maximize"><svg width="9" height="9"><path d="M1 1.500h7M1.500 1v7h6V1" fill="none" stroke="#fff" strokeWidth="1.300" /></svg></TitleButton>
        <TitleButton type="button" aria-label="Close" $close><svg width="9" height="9"><path d="m1 1 7 7m0-7L1 8" stroke="#fff" strokeWidth="1.600" /></svg></TitleButton>
      </DialogButtons>
    </DialogTitle>
    <DialogBody>
      <Form>
        <FieldLabel htmlFor="location">Geodatabase Location</FieldLabel>
        <FieldRow $h={17}>
          <TextBox id="location" defaultValue="D:\Aquaveo\subsurface analyst\boreholes" />
          <PickButton type="button" aria-label="Browse folder">
            <svg width="12" height="12" viewBox="0 0 12 12"><path d="M1 4h4l1 1h4v5H1z" fill="#e8b93c" stroke="#7a5b14" strokeWidth=".700" /><path d="m1 10 2-4h9l-2 4z" fill="#ffe07a" stroke="#7a5b14" strokeWidth=".700" /><path d="M7 4q0-3 3-3v2" fill="none" stroke="#2467b8" /></svg>
          </PickButton>
        </FieldRow>
        <FieldLabel htmlFor="name">Geodatabase Name</FieldLabel>
        <FieldRow $h={14}><TextBox id="name" defaultValue="Boreholes" /></FieldRow>
        <FieldLabel htmlFor="reference">Spatial Reference</FieldLabel>
        <FieldRow $h={17}>
          <TextBox id="reference" defaultValue="NAD_1983_StatePlane_California_II_FIPS_0402_Feet" />
          <PickButton type="button" aria-label="Properties">
            <svg width="12" height="12" viewBox="0 0 12 12"><path d="M1 3.500h9v7.500H1z" fill="#e6eefb" stroke="#5878a8" /><path d="M1 3h9v2H1z" fill="#5b8ad8" /><path d="M4 3q3-3 7-1v4L8 5 5 6z" fill="#e9bc62" stroke="#8a6a2a" strokeWidth=".600" /></svg>
          </PickButton>
        </FieldRow>
        <TickRow $lead><Tick type="checkbox" defaultChecked />Use Personal Geodatabase (optional)</TickRow>
        <FieldLabel as="div">Framework Datasets to Create (optional)</FieldLabel>
        <DatasetList
          thumb={49}
          checked={["Well"]}
          names={["WaterLine", "WaterBody", "Watershed", "WaterPoint", "Aquifer", "Well", "MonitoringPoint", "TimeSeries", "VariableDefinition"]}
        />
        <FieldLabel as="div">Subsurface Datasets to Create (optional)</FieldLabel>
        <DatasetList
          thumb={53}
          checked={["BoreholeLog", "BoreLine", "HydrogeologicUnit"]}
          names={["BoreholeLog", "BorePoint", "BoreLine", "HydrogeologicUnit", "SectionLine", "GeoSection", "GeoArea", "GeoVolume", "GeoRasters"]}
        />
        <FieldLabel as="div">Simulation Datasets to Create (optional)</FieldLabel>
      </Form>
      <VerticalRail thumb={286} />
    </DialogBody>
    <DialogFoot>
      <XpButton type="button" $w={50} $main>OK</XpButton>
      <XpButton type="button" $w={50}>Cancel</XpButton>
      <XpButton type="button" $w={60}>Environments...</XpButton>
      <XpButton type="button" $w={66}>Show Help &gt;&gt;</XpButton>
    </DialogFoot>
  </Dialog>
);

const VIEW_ICONS: [string, string][] = [
  ["Single page", "M1.500.500h10v12h-10z"],
  ["Continuous", "M.500.500h12v5H.500zM.500 7.500h12v5H.500z"],
  ["Facing", "M.500.500h5v12h-5zM7.500.500h5v12h-5z"],
  ["Continuous facing", "M.500.500h12v12H.500zM6.500.500v12M.500 6.500h12"],
  ["Full screen", "M.500.500h12v9H.500zM2.500 2.500h8v5h-8zM4.500 10v2M8.500 10v2M1.500 12.500h10"],
  ["Full screen facing", "M.500.500h12v9H.500zM2.500 2.500h8v5h-8zM6.500 2.500v5M4.500 10v2M8.500 10v2M1.500 12.500h10"],
];

const DOCS = ["Wohlmutter (2015) - GIS basierte ...", "ofr2014-1167_carrell-tools-and-te...", "overview_poster", "overview_poster", "Tutorial"];

export default function App() {
  const [zoom, setZoom] = useState(75);
  return (
    <Shell>
      <Global />
      <TitleBar>
        <QuickAccess>
          <NitroTile />
          <BareButton type="button" aria-label="Open">
            <svg width="23" height="16" viewBox="-1 0 23 16"><path d="M5 14V3h5l1.500 2H18v3H9L6 14z" fill="#4c4c4c" /><path d="M9.500 7H21l-3 8H6z" fill={INK} stroke="#fff" strokeWidth=".600" /></svg>
          </BareButton>
          <BareButton type="button" aria-label="Save">
            <svg width="16" height="16" viewBox="0 0 16 16"><path d="M.700.700h14.600v14.600H.700z" fill="#d9d9d9" stroke="#a5a5a5" strokeWidth="1.400" /><path d="M3.500 1h9v6h-9z" fill="#fff" /><path d="M4 3h8M4 5h8" stroke="#f0a890" /><path d="M4.500 10h7v5h-7z" fill="#fff" stroke="#999" /></svg>
          </BareButton>
          <BareButton type="button" aria-label="Print">
            <svg width="16" height="16" viewBox="0 0 16 16"><path d="M3 0h10v4H3zM0 5h16v7h-3V9H3v3H0z" fill={INK} /><path d="M4 10h8v5.500H4z" fill="#fff" stroke={INK} /><path d="M5.500 12h5M5.500 14h5" stroke={ORANGE} /></svg>
          </BareButton>
          <BareButton type="button" aria-label="Undo">
            <svg width="19" height="14" viewBox="1 0 16 14"><path d="M2 5.500 8 1v3c6 0 7 4 6 9-1-3-2-5-6-5v3z" fill="#b0b0b0" /></svg>
          </BareButton>
          <Down c="#aaa" />
          <BareButton type="button" aria-label="Redo">
            <svg width="18" height="14" viewBox="1 0 16 14"><path d="m16 5.500-6-4.500v3C4 4 2 8 3.500 13 4 10 6 8 10 8v3z" fill="#b0b0b0" /></svg>
          </BareButton>
          <Down c="#aaa" />
          <BareButton type="button" aria-label="Select tool">
            <svg width="16" height="18" viewBox="3 0 16 18"><path d="M6 1.500h8v8H6z" fill="#f8ddd3" stroke="#d96a45" strokeWidth="1.400" /><path d="M9.500 5.500v10l2.500-2 1.500 3.500 2-1-1.500-3.200h3z" fill="#fff" stroke="#444" /></svg>
          </BareButton>
          <Down />
          <BareButton type="button" aria-label="Customize toolbar">
            <svg width="8" height="8" viewBox="4 0 8 8"><path d="M5 1h6" stroke={RUST} /><path d="M5 3.500h6L8 7z" fill={RUST} /></svg>
          </BareButton>
        </QuickAccess>
        <AppTitle>Boreholes.pdf - Nitro Pro 10</AppTitle>
        <WindowButtons>
          <WindowButton type="button" aria-label="Minimize"><svg width="8" height="8"><path d="M1 6h6" stroke="#555" strokeWidth="2" /></svg></WindowButton>
          <WindowButton type="button" aria-label="Restore"><svg width="10" height="10" fill="none" stroke="#555"><path d="M1 4.500h5.500V9H1zM1 5.500h5M3.500 4V1.500h5.500v4.500H7M3.500 2h5" /></svg></WindowButton>
          <WindowButton type="button" aria-label="Close"><svg width="9" height="9"><path d="m1 1 7 7m0-7L1 8" stroke="#555" strokeWidth="1.400" /></svg></WindowButton>
        </WindowButtons>
      </TitleBar>

      <MenuBar>
        <FileTab type="button">FILE</FileTab>
        <MenuTab type="button" $active>HOME</MenuTab>
        {["EDIT", "REVIEW", "FORMS", "PROTECT", "CLOUD", "HELP"].map((m) => (
          <MenuTab key={m} type="button">{m}</MenuTab>
        ))}
        <Account type="button">
          Nitro Cloud
          <svg width="24" height="24" viewBox="0 0 24 24"><path d="M0 0h24v24H0z" fill="#c4c4c4" /><path d="M12 2c-5 0-7 4-6.500 8 .4 3 2 4 3 7 .2 2-.5 3-4.500 4.500-1.500.5-2.500 1-3 2.500h22c-.500-1.500-1.500-2-3-2.500-4-1.500-4.700-2.500-4.500-4.500 1-3 2.600-4 3-7C19 6 17 2 12 2z" fill="#fff" /></svg>
          <Chevron />
        </Account>
      </MenuBar>

      <Ribbon>
        <Group $lead={8}>
          <GroupTools>
            <ToolButton icon={Glyph.hand} w={42} lines={["Hand"]} on />
            <ToolButton icon={Glyph.zoom} w={40} lines={["Zoom"]} menu="below" />
            <SmallTools>
              <SmallTool type="button">
                <svg width="17" height="14" viewBox="0 0 17 14"><path d="M1 1v12M16 1v12" stroke={INK} strokeWidth="1.300" /><path d="M7.500 3v8L3 7zM9.500 3v8L14 7z" fill={INK} /></svg>
                Fit Width
              </SmallTool>
              <SmallTool type="button">
                <svg width="17" height="16" viewBox="0 0 17 16"><path d="M2 .700h13M2 15.300h13" stroke={INK} strokeWidth="1.300" /><path d="M4.500 7 8.500 2.500 12.500 7zM4.500 9l4 4.500 4-4.500z" fill={INK} /></svg>
                Fit Page
              </SmallTool>
              <SmallTool type="button">
                <svg width="17" height="16" viewBox="0 0 17 16"><path d="M12 4.500a5 5 0 1 0 1 6" fill="none" stroke={INK} strokeWidth="2.400" /><path d="M14.500 1v6.500H8z" fill={INK} /></svg>
                Rotate View
              </SmallTool>
            </SmallTools>
          </GroupTools>
          <GroupName>View</GroupName>
        </Group>
        {GROUPS.map((g) => (
          <Group key={g.name}>
            <GroupTools>{g.tools.map((t) => <ToolButton key={t.lines.join(" ")} {...t} />)}</GroupTools>
            <GroupName>{g.name}</GroupName>
          </Group>
        ))}
        <RibbonEnd>
          <BareButton type="button" aria-label="Collapse ribbon"><Chevron up w={8} /></BareButton>
        </RibbonEnd>
      </Ribbon>

      <Work>
        <Sidebar>
          <SideStack>
            <BareButton type="button" aria-label="Pages">
              <svg width="13" height="16" viewBox="0 0 13 16"><path d="M.700.700h11.600v14.600H.700z" fill="#fff" stroke={INK} strokeWidth="1.300" /><path d="M3 4.500h7M3 7.500h7M3 10.500h7" stroke="#aaa" /></svg>
            </BareButton>
            <BareButton type="button" aria-label="Search">
              <svg width="15" height="16" viewBox="0 0 15 16"><path d="M6 15.300H.700V.700h8l3 3v3" fill="none" stroke={INK} strokeWidth="1.300" /><path d="M8 .500v4h4z" fill={INK} /><path d="M2.500 5h4M2.500 7.500h4M2.500 10h3M2.500 12.500h3" stroke="#d9825f" /><circle cx="10" cy="10.500" r="2.800" fill="#fff" stroke="#c7502c" strokeWidth="1.200" /><path d="m12 12.500 3 3" stroke={INK} strokeWidth="1.500" /></svg>
            </BareButton>
            <BareButton type="button" aria-label="Bookmarks">
              <svg width="13" height="16" viewBox="0 0 13 16"><path d="M.700.700h11.600v14.600H.700z" fill="#fff" stroke={INK} strokeWidth="1.300" /><path d="M2 0h6v12L5 9.500 2 12z" fill={ORANGE} /></svg>
            </BareButton>
          </SideStack>
          <SideStack>
            <BareButton type="button" aria-label="Comments">
              <svg width="15" height="15" viewBox="0 0 15 15"><path d="M.700.700h13.600v9.600H6L4 13.500v-3.200H.700z" fill="#f4cf1c" stroke={INK} strokeWidth="1.200" /><path d="M3 3.500h9M3 5.500h9M3 7.500h9" stroke={INK} /></svg>
            </BareButton>
            <BareButton type="button" aria-label="Attachments">
              <svg width="15" height="16" viewBox="0 0 15 16"><path d="M5 .700 .700 5.500v9.800h6" fill="none" stroke={INK} strokeWidth="1.300" /><path d="M5 0v6H0z" fill={INK} /><path d="M8 5v7q0 3 3 3t3-3V4q0-2.500-2-2.500T10 4v7q0 1 1 1t1-1V5" fill="none" stroke="#cf5a35" strokeWidth="1.200" /></svg>
            </BareButton>
            <BareButton type="button" aria-label="Output">
              <svg width="15" height="16" viewBox="0 0 15 16"><path d="M.700.700h13.600v14.600H.700z" fill="#fff" stroke={INK} strokeWidth="1.300" /><path d="M3 4h1.500M3 6.500h1.500M3 9h1.500M3 11.500h1.500M6 4h6M6 6.500h6M6 9h6M6 11.500h6" stroke={INK} /></svg>
            </BareButton>
          </SideStack>
        </Sidebar>

        <Stage>
          <DocTabs>
            {DOCS.map((d, i) => (
              <DocTab key={i} type="button"><PdfDoc />{d}</DocTab>
            ))}
            <DocTab type="button" $active>
              <PdfDoc />Boreholes
              <CloseMark><svg width="9" height="9"><path d="m1 1 7 7m0-7L1 8" stroke="#555" strokeWidth="1.300" /></svg></CloseMark>
            </DocTab>
            <TabsEnd><BareButton type="button" aria-label="All documents"><Down c="#666" w={9} /></BareButton></TabsEnd>
          </DocTabs>

          <Viewer>
            <Pages>
              <Sheet $first>
                <FigureEnd>
                  <XpButton type="button" $w={55}>OK</XpButton>
                  <XpButton type="button" $w={56}>Cancel</XpButton>
                  <XpButton type="button" $w={55}><u>A</u>pply</XpButton>
                </FigureEnd>
                <Prose $top={14}>
                  <Caption><span>Figure 3</span><span>Setting the spatial reference for the new geodatabase.</span></Caption>
                  <Step><span>6.</span><p>Leave the <em>Use Personal Geodatabase</em> option checked.</p></Step>
                  <p>Next, you will select the datasets to be included in the new geodatabase.</p>
                  <Step><span>7.</span><p>From the <em>Framework Datasets</em> select the <strong>Well</strong> feature class.</p></Step>
                  <Step>
                    <span>8.</span>
                    <p>From the <em>Subsurface Datasets</em> select the <strong>BoreholeLog</strong> and <strong>HydrogeologicUnit</strong> tables, and the <strong>BoreLine</strong> feature class.</p>
                  </Step>
                </Prose>
                <RunningFoot><span /><span>Page 5 of 21</span><FootRight>© Aquaveo</FootRight></RunningFoot>
              </Sheet>
              <Sheet>
                <RunningHead><span>Arc Hydro GW Tutorials</span><span>Borehole Data</span></RunningHead>
                <Prose $top={22}>
                  <p>The tool inputs should be similar to the ones shown in Figure 4.</p>
                  <Step><span>9.</span><p>Select <em>OK</em> to run the tool.</p></Step>
                  <Step><span>10.</span><p>Click on the <em>Close</em> button when the tool has finished.</p></Step>
                  <GeodatabaseDialog />
                </Prose>
              </Sheet>
            </Pages>
            <ScrollRail><Chevron up c="#555" /><Chevron c="#555" /></ScrollRail>
            <Watermark>
              <WatermarkTitle>Activate Windows</WatermarkTitle>
              Go to Settings to activate Windows.
            </Watermark>
          </Viewer>
        </Stage>
      </Work>

      <StatusBar>
        <Pager>
          <BareButton type="button" aria-label="First page"><svg width="16" height="14"><path d="M1 0v14" stroke="#fff" strokeWidth="2" /><path d="M15.500 1v12L5 7z" fill="#fff" /></svg></BareButton>
          <BareButton type="button" aria-label="Previous page"><svg width="12" height="14"><path d="M11.500 1v12L1 7z" fill="#fff" /></svg></BareButton>
          <PageCount>6 OF 21</PageCount>
          <BareButton type="button" aria-label="Next page"><svg width="12" height="14"><path d="M.500 1v12L11 7z" fill="#fff" /></svg></BareButton>
          <BareButton type="button" aria-label="Last page"><svg width="17" height="14"><path d="M16 0v14" stroke="#fff" strokeWidth="2" /><path d="M.500 1v12L11 7z" fill="#fff" /></svg></BareButton>
          <BareButton type="button" aria-label="Previous view"><svg width="16" height="16"><circle cx="8" cy="8" r="8" fill="#fff" /><path d="M11 3v10L3.500 8z" fill={ORANGE} /></svg></BareButton>
          <BareButton type="button" aria-label="Next view"><svg width="16" height="16"><circle cx="8" cy="8" r="8" fill="#f9a582" /><path d="M5 3v10l7.500-5z" fill={ORANGE} /></svg></BareButton>
        </Pager>
        <ViewControls>
          {VIEW_ICONS.map(([name, d], i) => (
            <ViewButton key={name} type="button" aria-label={name} $on={i === 1}>
              <svg width="13" height="13" viewBox="0 0 13 13"><path d={d} fill="none" stroke="#fff" /></svg>
            </ViewButton>
          ))}
          <ZoomStep type="button" aria-label="Zoom out"><svg width="8" height="8"><path d="M0 4.500h8" stroke="#fff" /></svg></ZoomStep>
          <ZoomSlider type="range" aria-label="Zoom" min="0" max="200" value={zoom} onChange={(e) => setZoom(Number(e.target.value))} />
          <ZoomStep type="button" aria-label="Zoom in"><svg width="8" height="8"><path d="M0 4.500h8M4.500 1v7" stroke="#fff" /></svg></ZoomStep>
          <ZoomValue>{zoom}%</ZoomValue>
        </ViewControls>
      </StatusBar>

      <TaskBar>
        <StartButton type="button" aria-label="Start">
          <svg width="16" height="16" viewBox="0 0 16 16"><path d="M0 2.200 6.800 1.300v6.300H0zM7.600 1.200 16 0v7.600H7.600zM0 8.400h6.800v6.300L0 13.800zM7.600 8.400H16V16l-8.400-1.200z" fill="#fff" /></svg>
        </StartButton>
        <SearchBox>
          <svg width="22" height="22"><circle cx="11" cy="11" r="9" fill="none" stroke="#fff" strokeWidth="2.600" /></svg>
          <SearchInput type="search" aria-label="Search" placeholder="Type here to search" />
          <svg width="12" height="16" viewBox="0 0 12 16" fill="none" stroke="#bbb"><rect x="3.500" y=".500" width="5" height="10" rx="1" /><path d="M1 8v3q0 2 2 2h6q2 0 2-2V8M6 13v2.500M3.500 15.500h5" /></svg>
        </SearchBox>
        {Object.entries(TaskArt).map(([name, art]) => (
          <TaskButton key={name} type="button" aria-label={name} $open={OPEN_APPS.includes(name)} $front={name === "Nitro Pro"}>
            {art}
          </TaskButton>
        ))}
        <Tray>
          <BareButton type="button" aria-label="Hidden icons"><svg width="16" height="8"><path d="M.700 7 6.500 1.200 12.300 7" fill="none" stroke="#fff" strokeWidth="1.300" /></svg></BareButton>
          <BareButton type="button" aria-label="Network">
            <svg width="16" height="14" viewBox="0 0 16 14" fill="none" stroke="#ddd"><path d="M3 13Q3 3 13.500 2M6 13.500Q6 6 13.500 5.500M9 13.500Q9 9.500 13.500 9M.700 12Q1 2 12 .700" /><circle cx="12" cy="12" r="1.300" fill="#fff" /></svg>
          </BareButton>
          <BareButton type="button" aria-label="Volume">
            <svg width="17" height="14" viewBox="0 0 17 14" fill="none" stroke="#fff"><path d="M.500 4.500h2.500l3.500-3.500v12L3 9.500H.500zM8.500 5q1.500 2 0 4M11 3q3 4 0 8M13.500 1q4.500 6 0 12" /></svg>
          </BareButton>
          <Clock><span>10:27 PM</span><span>11/12/2017</span></Clock>
          <NoticeButton type="button" aria-label="Notifications"><svg width="17" height="16"><path d="M.700.700h15.600v11.600H11L8.500 15 6 12.300H.700z" fill="none" stroke="#fff" strokeWidth="1.300" /></svg></NoticeButton>
          <DesktopEdge />
        </Tray>
      </TaskBar>
    </Shell>
  );
}
